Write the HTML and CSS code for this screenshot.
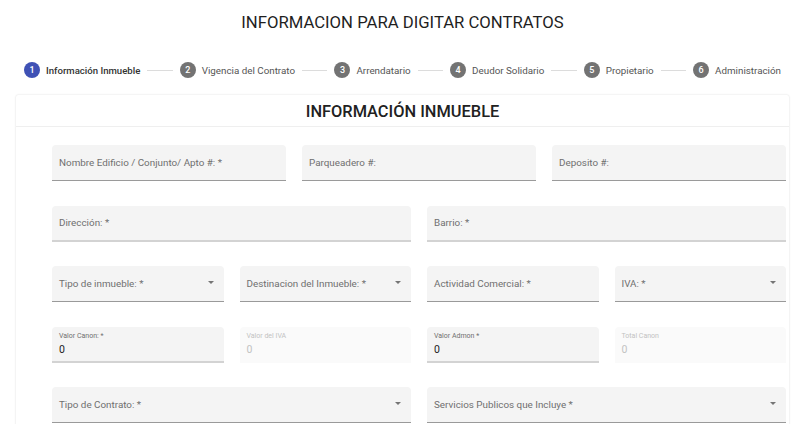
FILE: index.html
```html
<!DOCTYPE html>
<html lang="es">
<head>
<meta charset="utf-8">
<title>Informacion para digitar contratos</title>
<link rel="stylesheet" href="styles.css">
</head>
<body>
<div class="page">
  <h1 class="title">INFORMACION PARA DIGITAR CONTRATOS</h1>
  <div class="stepper">
    <div class="step active"><span class="num">1</span><span class="lbl">Información Inmueble</span></div>
    <div class="line"></div>
    <div class="step"><span class="num">2</span><span class="lbl">Vigencia del Contrato</span></div>
    <div class="line"></div>
    <div class="step"><span class="num">3</span><span class="lbl">Arrendatario</span></div>
    <div class="line"></div>
    <div class="step"><span class="num">4</span><span class="lbl">Deudor Solidario</span></div>
    <div class="line"></div>
    <div class="step"><span class="num">5</span><span class="lbl">Propietario</span></div>
    <div class="line"></div>
    <div class="step"><span class="num">6</span><span class="lbl">Administración</span></div>
  </div>
  <div class="card">
    <h2 class="card-title">INFORMACIÓN INMUEBLE</h2>
    <div class="form">
      <div class="field span4"><span class="ph">Nombre Edificio / Conjunto/ Apto #: *</span></div>
      <div class="field span4"><span class="ph">Parqueadero #:</span></div>
      <div class="field span4"><span class="ph">Deposito #:</span></div>

      <div class="field span6 thick"><span class="ph">Dirección: *</span></div>
      <div class="field span6 thick"><span class="ph">Barrio: *</span></div>

      <div class="field span3 select"><span class="ph">Tipo de inmueble: *</span><span class="arrow"></span></div>
      <div class="field span3 select"><span class="ph">Destinacion del Inmueble: *</span><span class="arrow"></span></div>
      <div class="field span3"><span class="ph">Actividad Comercial: *</span></div>
      <div class="field span3 select"><span class="ph">IVA: *</span><span class="arrow"></span></div>

      <div class="field span3 thick filled"><span class="small">Valor Canon: *</span><span class="val">0</span></div>
      <div class="field span3 disabled filled"><span class="small">Valor del IVA</span><span class="val">0</span></div>
      <div class="field span3 thick filled"><span class="small">Valor Admon *</span><span class="val">0</span></div>
      <div class="field span3 disabled filled"><span class="small">Total Canon</span><span class="val">0</span></div>

      <div class="field span6 select"><span class="ph">Tipo de Contrato: *</span><span class="arrow"></span></div>
      <div class="field span6 select"><span class="ph">Servicios Publicos que Incluye *</span><span class="arrow"></span></div>
    </div>
  </div>
</div>
</body>
</html>
```

FILE: styles.css
```css
html, body {
  margin: 0;
  padding: 0;
  background: #ffffff;
  font-family: Roboto, "Liberation Sans", sans-serif;
  color: #212121;
  overflow: hidden;
}

.page {
  width: 773px;
  margin-left: 16px;
}

.title {
  margin: 0;
  padding-top: 12px;
  font-size: 16.7px;
  line-height: 22px;
  font-weight: 400;
  text-align: center;
  color: #1f1f1f;
}

.stepper {
  display: flex;
  align-items: center;
  margin-top: 28px;
  margin-left: 8px;
  margin-right: 8px;
  height: 16px;
}

.step {
  display: flex;
  align-items: center;
  gap: 6px;
  flex: none;
}

.num {
  width: 16px;
  height: 16px;
  border-radius: 50%;
  background: #737373;
  color: #fff;
  font-size: 9px;
  line-height: 16px;
  text-align: center;
  font-weight: 500;
}

.lbl {
  font-size: 9.8px;
  color: #555;
  white-space: nowrap;
}

.step.active .num {
  background: #3f51b5;
}

.step.active .lbl {
  color: #333;
  font-weight: 500;
  font-size: 9.6px;
}

.line {
  flex: 1;
  height: 1px;
  background: #dcdcdc;
  margin: 0 7px;
}

.card {
  margin-top: 17px;
  background: #fff;
  box-shadow: 0 0 2px rgba(0, 0, 0, 0.16), 0 1px 1px rgba(0, 0, 0, 0.05);
  border-radius: 2px;
  height: 340px;
}

.card-title {
  margin: 0;
  padding-top: 7px;
  padding-bottom: 4px;
  font-size: 16.4px;
  line-height: 20px;
  font-weight: 500;
  text-align: center;
  color: #212121;
  border-bottom: 1px solid #efefef;
}

.form {
  display: grid;
  grid-template-columns: repeat(12, 1fr);
  column-gap: 16px;
  row-gap: 24.5px;
  padding: 18px 3px 0 36px;
}

.span3 { grid-column: span 3; }
.span4 { grid-column: span 4; }
.span6 { grid-column: span 6; }

.field {
  position: relative;
  box-sizing: border-box;
  height: 36px;
  background: #f4f4f4;
  border-radius: 4px 4px 0 0;
  border-bottom: 1px solid #9a9a9a;
  display: flex;
  align-items: center;
  padding-left: 7px;
}

.field.thick {
  border-bottom: 2px solid #d3d3d3;
}

.field.disabled {
  background: #fafafa;
  border-bottom: none;
}

.ph {
  font-size: 9.85px;
  color: #6f6f6f;
  white-space: nowrap;
}

.field.filled {
  flex-direction: column;
  align-items: flex-start;
  justify-content: flex-start;
}

.small {
  margin-top: 5px;
  font-size: 7px;
  line-height: 9px;
  color: #6f6f6f;
}

.val {
  margin-top: 2px;
  font-size: 10.5px;
  line-height: 13px;
  color: #212121;
}

.field.disabled .small,
.field.disabled .val {
  color: #c2c2c2;
}

.arrow {
  position: absolute;
  right: 10px;
  top: 15px;
  width: 0;
  height: 0;
  border-left: 3.5px solid transparent;
  border-right: 3.5px solid transparent;
  border-top: 3.5px solid #757575;
}
```
